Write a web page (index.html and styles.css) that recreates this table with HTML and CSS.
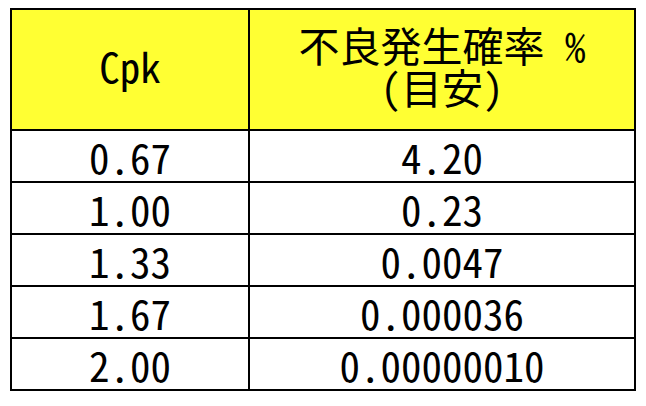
FILE: index.html
```html
<!DOCTYPE html>
<html lang="ja">
<head>
<meta charset="utf-8">
<title>Cpk</title>
<link rel="stylesheet" href="styles.css">
</head>
<body>
<table class="cpk-table">
  <colgroup>
    <col class="col-cpk">
    <col class="col-rate">
  </colgroup>
  <thead>
    <tr>
      <th>Cpk</th>
      <th><span class="line">不良発生確率 %</span><span class="line">(目安)</span></th>
    </tr>
  </thead>
  <tbody>
    <tr><td>0.67</td><td>4.20</td></tr>
    <tr><td>1.00</td><td>0.23</td></tr>
    <tr><td>1.33</td><td>0.0047</td></tr>
    <tr><td>1.67</td><td>0.000036</td></tr>
    <tr><td>2.00</td><td>0.00000010</td></tr>
  </tbody>
</table>
</body>
</html>
```

FILE: styles.css
```css
html, body {
  margin: 0;
  padding: 0;
  background: #ffffff;
}

body {
  padding: 8px 0 0 10px;
  font-family: "Noto Sans Mono CJK JP", "Noto Sans CJK JP", "Liberation Mono", monospace;
  color: #000000;
}

.cpk-table {
  border-collapse: separate;
  border-spacing: 0;
  table-layout: fixed;
  width: 626px;
  border-top: 2px solid #000;
  border-left: 2px solid #000;
}

.col-cpk { width: 238px; }
.col-rate { width: 386px; }

.cpk-table th,
.cpk-table td {
  border-right: 2px solid #000;
  border-bottom: 2px solid #000;
  padding: 0;
  text-align: center;
  vertical-align: middle;
  font-size: 41px;
  font-weight: normal;
  line-height: 42px;
}

.cpk-table th {
  background: #ffff33;
  height: 109px;
  padding-bottom: 10px;
}

.cpk-table td {
  height: 50px;
}

.line {
  display: block;
}
```
